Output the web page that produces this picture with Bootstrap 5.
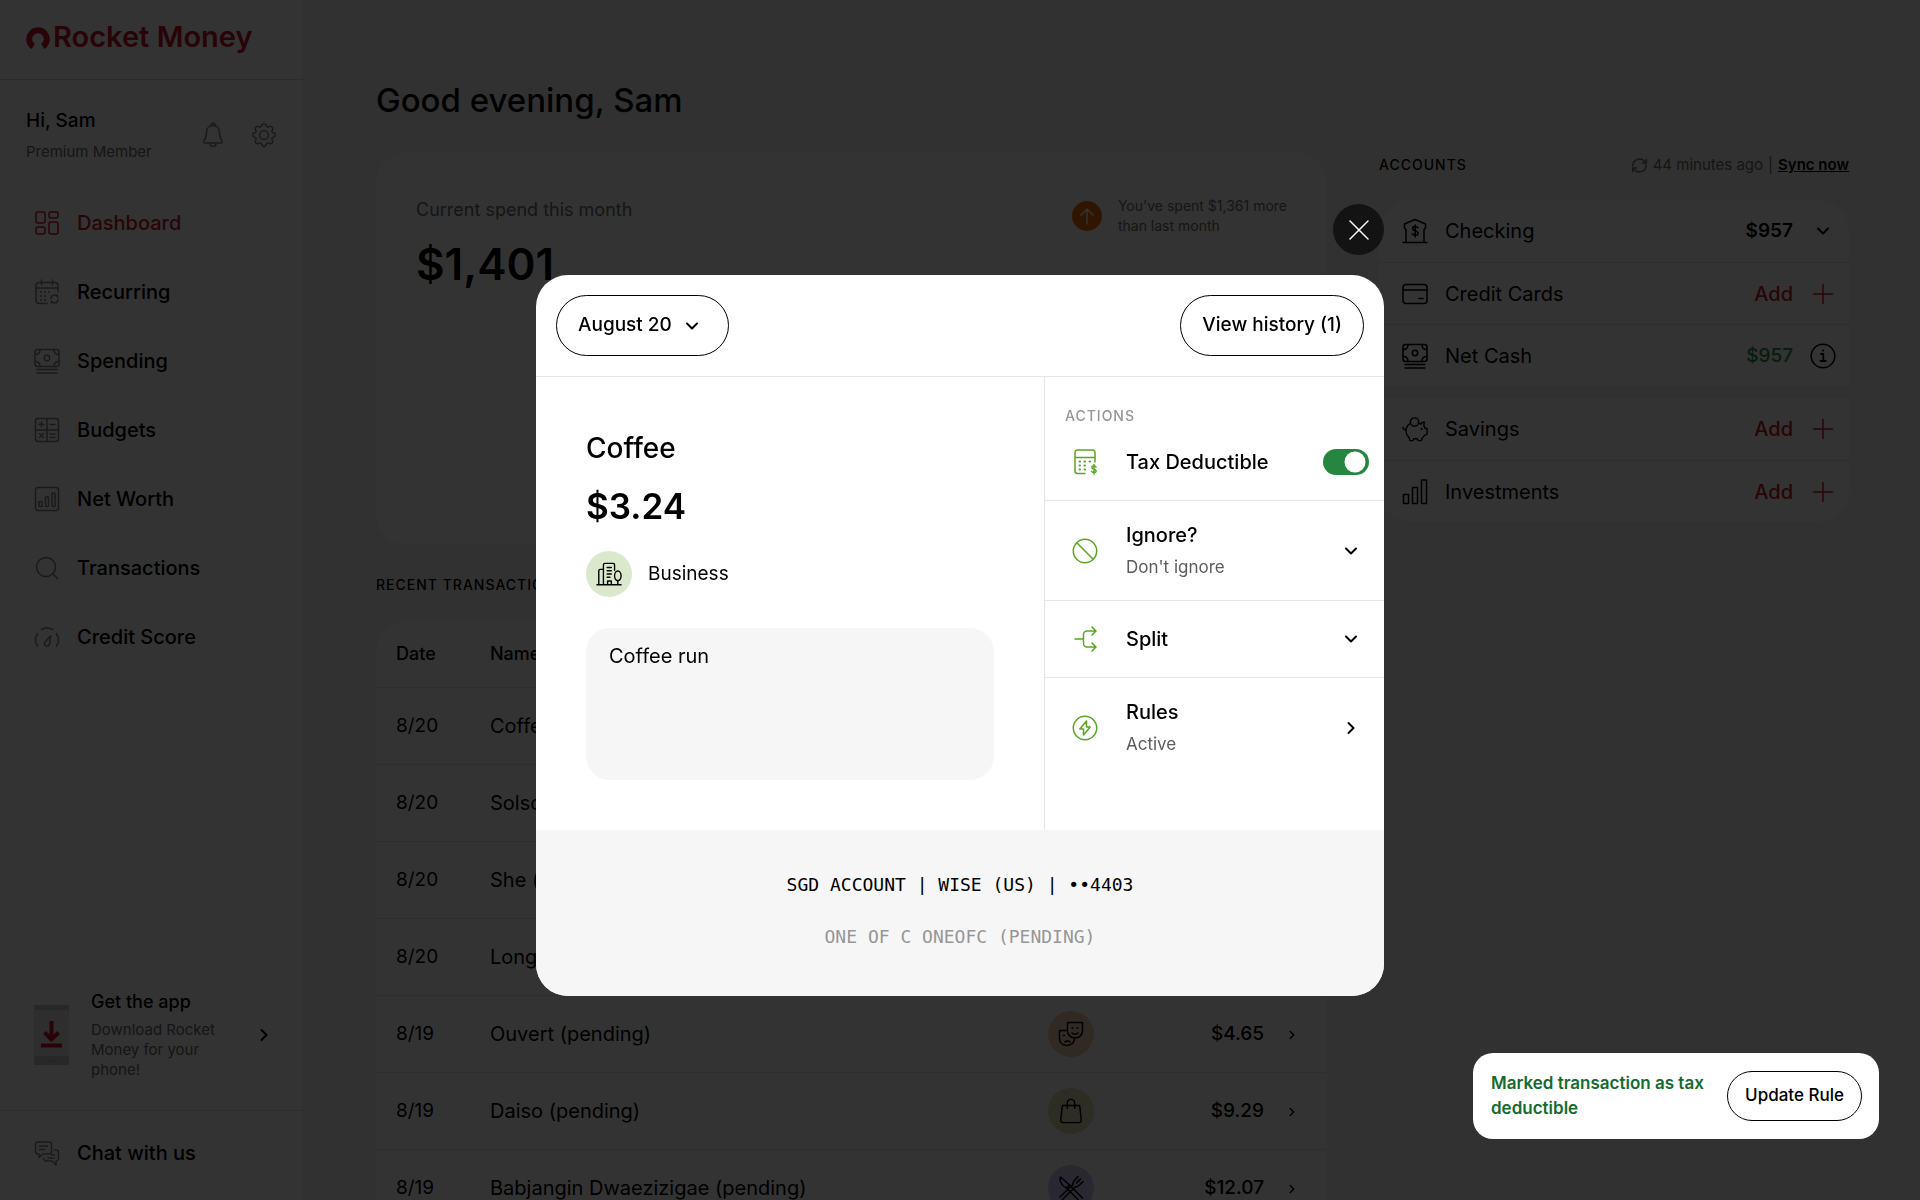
<!DOCTYPE html>
<html lang="en">
<head>
<meta charset="utf-8">
<meta name="viewport" content="width=device-width, initial-scale=1">
<title>Rocket Money</title>
<link href="https://cdn.jsdelivr.net/npm/bootstrap@5.3.0/dist/css/bootstrap.min.css" rel="stylesheet">
<style>
  :root { --brand: #c8142c; --line: #e6e6e6; --leaf: #5ba521; --muted-ink: #6b6b6b; }
  body { font-family: Inter, "Liberation Sans", sans-serif; font-size: 20px; line-height: 26px; color: #000; background: #f5f5f5; }
  svg { fill: none; stroke: currentColor; stroke-width: 1.5; stroke-linecap: round; stroke-linejoin: round; flex: none; }
  .ico { width: 26px; height: 26px; }
  .chev { width: 14px; height: 14px; stroke-width: 2; }
  .chev-sm { width: 10px; height: 10px; stroke-width: 2; }
  .fs-xs { font-size: 14px; line-height: 20px; }
  .fs-sm { font-size: 15px; line-height: 20px; }
  .fs-md { font-size: 18px; line-height: 24px; }
  .fs-lg { font-size: 19px; }
  .quiet { color: var(--muted-ink); }
  .brand-ink { color: var(--brand); }

  .side { width: 304px; background: #fff; border-right: 1px solid #f0f0f0; }
  .brand-bar { height: 80px; padding: 0 26px 6px; border-bottom: 1px solid #d8d8d8; font-size: 29px; font-weight: 600; gap: 2px; }
  .user-bar { padding: 28px 26px 0; }
  .user-icons { gap: 25px; }
  .icon-btn { background: none; border: 0; padding: 0; color: #808080; line-height: 0; }
  .menu-link { display: flex; align-items: center; gap: 17px; height: 69px; padding: 0 34px; font-weight: 500; color: #000; text-decoration: none; }
  .menu-link svg { color: #808080; }
  .menu-link.active, .menu-link.active svg { color: var(--brand); }
  .menu-list { padding-top: 26px; }
  .app-promo { padding: 0 32px 30px 34px; color: #000; text-decoration: none; gap: 22px; }
  .app-title { margin-bottom: 6px; }
  .chat-bar { border-top: 1px solid #e0e0e0; padding: 7px 0 13px; }

  .board { padding: 80px 71px 0 72px; gap: 52px; }
  .board h1 { font-size: 33px; line-height: 40px; font-weight: 500; margin: 0 0 32px; }
  .panel { background: #fff; border-radius: 32px; }
  .spend { height: 393px; padding: 46px 40px; }
  .total { font-size: 44px; line-height: 56px; font-weight: 600; margin-top: 14px; }
  .caption { font-size: 14px; line-height: 20px; font-weight: 500; letter-spacing: 1px; text-transform: uppercase; margin: 0; }
  .tx-caption { margin: 30px 0 26px; }
  .spend-alert { gap: 16px; margin-top: -2px; }
  .alert-dot { width: 30px; height: 30px; border-radius: 50%; background: #ed6800; color: #fff; }
  .tx { margin: 0; color: #000; border-collapse: collapse; }
  .tx th, .tx td { padding: 0 0 0 20px; vertical-align: middle; border: 0; border-bottom: 1px solid #e6e6e6; background: none; color: #000; }
  .tx th { height: 66px; font-size: 18px; font-weight: 500; }
  .tx td { height: 77px; }
  .tx td:first-child { font-size: 19px; }
  .tx td:last-child { padding-left: 23px; }
  .tx-date { width: 94px; } .tx-cat { width: 122px; } .tx-sum { width: 114px; } .tx-go { width: 63px; }
  .cat { width: 46px; height: 46px; border-radius: 50%; display: flex; align-items: center; justify-content: center; }
  .c-green { background: #dae8cb; } .c-peach { background: #f5cfae; } .c-olive { background: #e2dfae; } .c-violet { background: #cdc6f5; }

  .accounts { width: 470px; flex: none; padding-top: 75px; }
  .sync-row { gap: 5px; margin-bottom: 25px; }
  .acct { display: flex; align-items: center; height: 62px; padding: 0 13px 0 23px; }
  .acct + .acct { border-top: 1px solid #e6e6e6; }
  .acct .name { margin-left: 17px; margin-right: auto; }
  .acct .end-ico { margin-left: 17px; width: 26px; display: flex; justify-content: center; }
  .sum { font-size: 19px; font-weight: 600; }
  .money-up { color: #238a48; font-weight: 500; }
  .panel-gap { margin-top: 12px; }

  .modal-backdrop { --bs-backdrop-opacity: .8; }
  .tx-dialog { max-width: 848px; flex-direction: column; justify-content: center; align-items: stretch !important; }
  .close-dot { width: 51px; height: 51px; border: 0; border-radius: 50%; background: #131313; color: #fff; margin-bottom: 20px; }
  .tx-dialog .modal-content { border: 0; border-radius: 32px; overflow: hidden; color: #000; }
  .tx-head { padding: 20px; border-bottom: 1px solid var(--line); }
  .pill { --bs-btn-color: #000; --bs-btn-border-color: #000; --bs-btn-hover-bg: #f2f2f2; --bs-btn-hover-color: #000; --bs-btn-border-radius: 50rem; font-weight: 500; }
  .pill-lg { font-size: 19px; height: 61px; padding: 0 21px; }
  .pill-lg svg { margin: 0 8px 0 13px; }
  .pill-md { font-size: 17px; height: 50px; padding: 0 17px; white-space: nowrap; }
  .detail { padding: 50px; }
  .detail h2 { font-size: 28px; line-height: 42px; font-weight: 500; margin: 0; }
  .amount { font-size: 35px; line-height: 48px; font-weight: 600; margin: 13px 0 21px; }
  .note { height: 152px; border: 0; border-radius: 24px; background: #f6f6f6 !important; padding: 15px 23px; font-size: 20px; line-height: 26px; color: #000; resize: none; margin-top: 31px; }
  .acts { width: 340px; flex: none; border-left: 1px solid var(--line); padding-top: 29px; }
  .acts .caption { padding-left: 20px; color: #969696; }
  .act { display: flex; align-items: center; width: 100%; border: 0; background: none; text-align: left; padding: 0 26px 0 27px; color: #000; }
  .act + .act { border-top: 1px solid var(--line); }
  .act > svg:first-child { color: var(--leaf); margin-right: 28px; }
  .act .grow { flex: 1; font-weight: 500; }
  .act small { display: block; font-size: 17px; line-height: 24px; margin-top: 7px; font-weight: 400; color: #5c5c5c; }
  .act-tax { height: 74px; padding: 0 15px 3px 27px; }
  .act-one { height: 77px; } .act-two { height: 100px; }
  .form-switch .toggle { width: 46px; height: 26px; margin: 0; float: none; border: 0; background-color: #26863f; background-size: 28px; background-position: right -1px center; }
  .form-switch .toggle:checked { background-color: #26863f; }
  .form-switch .toggle:focus { box-shadow: none; }
  .source { background: #f6f6f6; padding: 42px 20px 46px; font-family: "DejaVu Sans Mono", "Liberation Mono", monospace; font-size: 18px; text-align: center; }
  .source p { margin: 0; } .source p + p { margin-top: 26px; color: #969696; }

  .note-toast { right: 41px; bottom: 61px; z-index: 1080; width: 406px; padding: 18px 17px 18px 18px; gap: 16px; background: #fff; border-radius: 20px; }
  .note-toast p { margin: 0; font-size: 17px; line-height: 25px; font-weight: 600; color: #146c2e; }
</style>
<script src="https://cdn.jsdelivr.net/npm/bootstrap@5.3.0/dist/js/bootstrap.bundle.min.js"></script>
</head>
<body class="vh-100 overflow-hidden">

<svg width="0" height="0" class="d-none" aria-hidden="true">
  <symbol id="down" viewBox="0 0 14 14"><path d="M2 4.500l5 5 5-5"/></symbol>
  <symbol id="right" viewBox="0 0 14 14"><path d="M4.500 2l5 5-5 5"/></symbol>
  <symbol id="plus" viewBox="0 0 24 24"><path d="M12 2.500v19M2.500 12h19"/></symbol>
  <symbol id="bell" viewBox="0 0 26 26"><path d="M13 3.500c-4.500 0-6.500 3.500-6.500 7 0 5-1.500 6.500-2.500 8.500-.5 1 0 2 1.200 2h15.600c1.200 0 1.700-1 1.200-2-1-2-2.500-3.500-2.500-8.500 0-3.500-2-7-6.500-7zM11 3.300c0-2.800 4-2.800 4 0M10 21.500c0 4 6 4 6 0"/></symbol>
  <symbol id="gear" viewBox="0 0 26 26"><circle cx="13" cy="13" r="4.500"/><path d="M10.800 3.500c.6-2.500 3.800-2.500 4.400 0 .4 1.600 1.600 2 3 1.200 2.100-1.300 4.400 1 3.100 3.100-.8 1.400-.4 2.600 1.200 3 2.500.6 2.500 3.800 0 4.400-1.600.4-2 1.600-1.200 3 1.300 2.100-1 4.400-3.100 3.100-1.400-.8-2.600-.4-3 1.200-.6 2.500-3.800 2.500-4.400 0-.4-1.600-1.600-2-3-1.200-2.100 1.300-4.400-1-3.100-3.100.8-1.400.4-2.600-1.200-3-2.500-.6-2.500-3.800 0-4.400 1.600-.4 2-1.600 1.200-3-1.300-2.100 1-4.400 3.100-3.100 1.400.8 2.600.4 3-1.200z"/></symbol>
  <symbol id="grid" viewBox="0 0 26 26"><rect x="2" y="2" width="9" height="11" rx="2"/><rect x="15" y="2" width="9" height="6" rx="2"/><rect x="2" y="17" width="9" height="7" rx="2"/><rect x="15" y="12" width="9" height="12" rx="2"/></symbol>
  <symbol id="calendar" viewBox="0 0 26 26"><path d="M13 24.500H5a3 3 0 0 1-3-3v-15a3 3 0 0 1 3-3h16a3 3 0 0 1 3 3v6M2 9h22M7.500 1v5M18.500 1v5M17 19.500c0-4 5.500-4.500 6.500-1.500v-2M24 20.500c0 4-5.500 4.500-6.500 1.500v2"/><path d="M7 13h.1M11 13h.1M15 13h.1M7 17h.1M11 17h.1M7 21h.1M11 21h.1" stroke-width="2"/></symbol>
  <symbol id="cash" viewBox="0 0 26 26"><rect x="1" y="1.500" width="24" height="17" rx="2.500"/><circle cx="13" cy="10" r="2.700"/><path d="M1.500 6.500c3 0 4.500-2 4.500-5M24.500 6.500c-3 0-4.500-2-4.500-5M1.500 13.500c3 0 4.500 2 4.500 5M24.500 13.500c-3 0-4.500 2-4.500 5M3 21.500h20M3 25h20"/></symbol>
  <symbol id="calc" viewBox="0 0 26 26"><rect x="1.500" y="1.500" width="23" height="23" rx="2.500"/><path d="M13 1.500v23M1.500 13h23M5 7.500h5M7.500 5v5M16 7.500h5M5.500 16.500l4 4M9.500 16.500l-4 4M16 17h5M16 20.500h5"/></symbol>
  <symbol id="chart" viewBox="0 0 26 26"><rect x="1.500" y="1.500" width="23" height="23" rx="2.500"/><rect x="5" y="15.500" width="3" height="5" rx=".5"/><rect x="11.500" y="11" width="3" height="9.500" rx=".5"/><rect x="18" y="7" width="3" height="13.500" rx=".5"/></symbol>
  <symbol id="search" viewBox="0 0 26 26"><circle cx="12" cy="12" r="9.500"/><path d="M19 19l4.500 4.500"/></symbol>
  <symbol id="gauge" viewBox="0 0 26 26"><path d="M7.500 5.500c3.500-2.300 7.500-2.300 11 0M3.500 9.500c-2.500 4-2.500 9 0 12.500M22.500 9.500c2.500 4 2.500 9 0 12.500M16.500 12l-5.500 6c-1.800 2.500 1.500 5.500 3.700 3.500.8-.9 1-1.500 1.100-2.500z"/></symbol>
  <symbol id="chat" viewBox="0 0 26 26"><path d="M4 2h11a2.500 2.500 0 0 1 2.500 2.500v7A2.500 2.500 0 0 1 15 14H9l-4 3.500V14H4a2.500 2.500 0 0 1-2.500-2.500v-7A2.500 2.500 0 0 1 4 2zM5.500 6h8M5.500 9.500h5M20.500 10H22a2.500 2.500 0 0 1 2.500 2.500v6A2.500 2.500 0 0 1 22 21v4l-4-4h-6a2.500 2.500 0 0 1-2.500-2.500M14 18h6M17.500 15h3"/></symbol>
  <symbol id="bank" viewBox="0 0 26 26"><path d="M1 24.500h24M4 24V11.500L2.500 10V6L13 1.500 23.500 6v4L22 11.500V24M16 9.800c-1.200-2-5.500-1.800-5.500.8 0 3 5.500 1.500 5.500 4.600 0 2.600-4.500 2.800-5.800.5M13.200 7v12"/></symbol>
  <symbol id="ccard" viewBox="0 0 26 26"><rect x="1" y="3.500" width="24" height="19" rx="3"/><path d="M1 9h24M17 17.500h4"/></symbol>
  <symbol id="info" viewBox="0 0 26 26"><circle cx="13" cy="13" r="11.800"/><path d="M11 11h2.300v7M10.500 18h5.300M13 7.500h.2" stroke-width="1.800"/></symbol>
  <symbol id="pig" viewBox="0 0 28 26"><circle cx="13.500" cy="5.500" r="4.500"/><path d="M17.500 6.500c1 .2 2 .6 3 1.200.6-1.400 1.800-2.200 3.500-2.200l-.5 4c.8 1 1.200 2 1.500 3h2v6l-3 1.500c-.8 1.500-1.800 2.500-2.500 3.200l-.8 2.300h-3.400l-.8-2h-3.800l-.8 2H8.500L7.500 22c-3.500-3-4.500-8.500-1.500-12.500.9-1.200 2-2 3.200-2.600M4.500 13.500c-2 .5-3.500-.5-3.500-2.500"/><path d="M21 13h.1" stroke-width="2.200"/></symbol>
  <symbol id="bars" viewBox="0 0 26 26"><rect x="1.500" y="15.500" width="5" height="9"/><rect x="10.500" y="8.500" width="5" height="16"/><rect x="19.500" y="1" width="5" height="23.500"/></symbol>
  <symbol id="sync" viewBox="0 0 18 18"><path d="M2 9.500C1.500 3 10-.5 14.500 4.500L16 6.200M16 8.500c.5 6.500-8 10-12.500 5L2 11.800M16.300 2.300v4h-4M1.700 15.700v-4h4"/></symbol>
  <symbol id="city" viewBox="0 0 28 26"><path d="M1 24.500h26M3 24V9.500a1.500 1.500 0 0 1 1.500-1.500H8V24M8 24V3a1.500 1.500 0 0 1 1.500-1.500h9A1.500 1.500 0 0 1 20 3v6M12 6h4.500M12 9.500h4.500M12 13h4.500M12 16.500h3M12.500 24v-3.500h4V24M23.500 24v-3.500"/><ellipse cx="23.500" cy="15" rx="3.500" ry="5.200"/></symbol>
  <symbol id="masks" viewBox="0 0 26 26"><path d="M9.500 1.500H24.500v8c0 10-15 10-15 0zM8.500 9.500H1.500v8c0 8.500 13 9.500 15 1"/><path d="M14 12c1.500 1.500 4.500 1.500 6 0M7 21c1-1.500 4-1.500 5 0M14 7h1M19 7h1M5.500 14.500h1"/></symbol>
  <symbol id="bag" viewBox="0 0 26 28"><path d="M4.500 8h17a1 1 0 0 1 1 1l1.500 15a2.500 2.500 0 0 1-2.500 2.500h-17A2.500 2.500 0 0 1 2 24L3.500 9a1 1 0 0 1 1-1zM9 11V6c0-6 8-6 8 0v5"/></symbol>
  <symbol id="dine" viewBox="0 0 26 26"><path d="M2.500 2c-1.500 4 1.500 9 6 11l3-3zM11.500 10L24.500 23M8.500 13l11.500 11.500M2 22L15 9.500M4.500 24.500L17.500 11.500M15 9.500c-.5-1.500 0-2.500 1-3.500L20 1.500M17.500 11.500c1.500.5 2.500 0 3.500-1L25 6.500M18.500 8l4-4"/></symbol>
  <symbol id="tax" viewBox="0 0 26 26"><path d="M13 24.500H5.500A2.500 2.500 0 0 1 3 22V3.500A2.500 2.500 0 0 1 5.500 1h15A2.500 2.500 0 0 1 23 3.500V13M3 8.500h20M24 18c-1-1.700-4.200-1.500-4.200.4 0 2.200 4.400 1.300 4.400 3.600 0 2-3.500 2.200-4.600.4M22 15.500v9.500"/><path d="M7.500 12.500h.5M12.500 12.500h.5M17.500 12.500h.5M7.500 16.500h.5M12.500 16.500h.5M7.500 20.500h.5M12.500 20.500h.5" stroke-width="2"/></symbol>
  <symbol id="ban" viewBox="0 0 26 26"><circle cx="13" cy="13" r="11.700"/><path d="M4.800 4.800l16.400 16.400"/></symbol>
  <symbol id="split" viewBox="0 0 26 26"><path d="M3 13h8.500M23.500 5H15a3.500 3.500 0 0 0-3.500 3.500v9A3.500 3.500 0 0 0 15 21h8.500M20 1l4 4-4 4M20 17l4 4-4 4"/></symbol>
  <symbol id="bolt" viewBox="0 0 26 26"><circle cx="13" cy="13" r="11.700"/><path d="M14.500 6l-6.700 8h3.700v6l6.700-8h-3.700z"/></symbol>
</svg>

<div class="d-flex vh-100">
  <aside class="side d-flex flex-column flex-shrink-0 vh-100">
    <div class="brand-bar brand-ink d-flex align-items-center">
      <svg width="25" height="25" viewBox="0 0 25 25" aria-hidden="true"><path d="M7.200 22.500A8.800 8.800 0 1 1 16.800 22.500" stroke-width="6" stroke-linecap="butt"/></svg>
      <span>Rocket Money</span>
    </div>
    <div class="user-bar d-flex align-items-center justify-content-between">
      <div>
        <div class="fs-lg fw-medium">Hi, Sam</div>
        <div class="fs-sm quiet mt-2">Premium Member</div>
      </div>
      <div class="user-icons d-flex">
        <button class="icon-btn" type="button" aria-label="Notifications"><svg class="ico"><use href="#bell"/></svg></button>
        <button class="icon-btn" type="button" aria-label="Settings"><svg class="ico"><use href="#gear"/></svg></button>
      </div>
    </div>
    <nav class="menu-list">
      <a class="menu-link active" href="#"><svg class="ico"><use href="#grid"/></svg>Dashboard</a>
      <a class="menu-link" href="#"><svg class="ico"><use href="#calendar"/></svg>Recurring</a>
      <a class="menu-link" href="#"><svg class="ico"><use href="#cash"/></svg>Spending</a>
      <a class="menu-link" href="#"><svg class="ico"><use href="#calc"/></svg>Budgets</a>
      <a class="menu-link" href="#"><svg class="ico"><use href="#chart"/></svg>Net Worth</a>
      <a class="menu-link" href="#"><svg class="ico"><use href="#search"/></svg>Transactions</a>
      <a class="menu-link" href="#"><svg class="ico"><use href="#gauge"/></svg>Credit Score</a>
    </nav>
    <a class="app-promo d-flex align-items-center mt-auto" href="#">
      <svg width="35" height="60" viewBox="0 0 35 60" aria-hidden="true"><path d="M0 0h35v60H0z" fill="#e4e4e4" stroke="none"/><path d="M0 0h35v5H0zM0 51h35v9H0z" fill="#c8c8c8" stroke="none"/><path d="M12 55.500h10" stroke="#b5b5b5"/><path d="M17.500 16v18M10.500 27.500l7 7 7-7M7 40.500h21" stroke="#c8142c" stroke-width="4" stroke-linecap="butt"/></svg>
      <span class="flex-grow-1">
        <span class="app-title d-block fs-md fw-medium">Get the app</span>
        <span class="d-block fs-sm quiet">Download Rocket<br>Money for your<br>phone!</span>
      </span>
      <svg class="chev"><use href="#right"/></svg>
    </a>
    <div class="chat-bar"><a class="menu-link" href="#"><svg class="ico"><use href="#chat"/></svg>Chat with us</a></div>
  </aside>

  <main class="board flex-grow-1 d-flex align-items-start">
    <section class="flex-grow-1">
      <h1>Good evening, Sam</h1>
      <div class="panel spend d-flex justify-content-between align-items-start">
        <div>
          <div class="fs-md quiet">Current spend this month</div>
          <div class="total">$1,401</div>
        </div>
        <div class="spend-alert d-flex align-items-center fs-xs quiet">
          <span class="alert-dot d-flex align-items-center justify-content-center"><svg width="18" height="18" viewBox="0 0 18 18"><path d="M9 17V2M3 8l6-6 6 6"/></svg></span>
          <span>You've spent $1,361 more<br>than last month</span>
        </div>
      </div>
      <h2 class="caption tx-caption">Recent transactions</h2>
      <div class="panel">
        <table class="table tx">
          <colgroup><col class="tx-date"><col><col class="tx-cat"><col class="tx-sum"><col class="tx-go"></colgroup>
          <thead><tr><th>Date</th><th>Name</th><th>Category</th><th class="text-end">Amount</th><th></th></tr></thead>
          <tbody>
            <tr><td>8/20</td><td>Coffee</td><td><span class="cat c-green"><svg class="ico"><use href="#city"/></svg></span></td><td class="text-end fs-lg fw-medium">$3.24</td><td><svg class="chev-sm"><use href="#right"/></svg></td></tr>
            <tr><td>8/20</td><td>Solso</td><td></td><td></td><td></td></tr>
            <tr><td>8/20</td><td>She (pending)</td><td></td><td></td><td></td></tr>
            <tr><td>8/20</td><td>Long</td><td></td><td></td><td></td></tr>
            <tr><td>8/19</td><td>Ouvert (pending)</td><td><span class="cat c-peach"><svg class="ico"><use href="#masks"/></svg></span></td><td class="text-end fs-lg fw-medium">$4.65</td><td><svg class="chev-sm"><use href="#right"/></svg></td></tr>
            <tr><td>8/19</td><td>Daiso (pending)</td><td><span class="cat c-olive"><svg class="ico"><use href="#bag"/></svg></span></td><td class="text-end fs-lg fw-medium">$9.29</td><td><svg class="chev-sm"><use href="#right"/></svg></td></tr>
            <tr><td>8/19</td><td>Babjangin Dwaezizigae (pending)</td><td><span class="cat c-violet"><svg class="ico"><use href="#dine"/></svg></span></td><td class="text-end fs-lg fw-medium">$12.07</td><td><svg class="chev-sm"><use href="#right"/></svg></td></tr>
          </tbody>
        </table>
      </div>
    </section>

    <section class="accounts">
      <div class="sync-row d-flex align-items-center fs-sm quiet">
        <h2 class="caption text-black me-auto">Accounts</h2>
        <svg width="17" height="17"><use href="#sync"/></svg><span>44 minutes ago</span><span>|</span><a class="text-black fw-semibold" href="#">Sync now</a>
      </div>
      <div class="panel rounded-bottom-0">
        <div class="acct"><svg class="ico"><use href="#bank"/></svg><span class="name">Checking</span><span class="sum">$957</span><span class="end-ico"><svg class="chev"><use href="#down"/></svg></span></div>
        <div class="acct"><svg class="ico"><use href="#ccard"/></svg><span class="name">Credit Cards</span><a class="brand-ink fw-medium text-decoration-none" href="#">Add</a><span class="end-ico brand-ink"><svg width="24" height="24"><use href="#plus"/></svg></span></div>
        <div class="acct"><svg class="ico"><use href="#cash"/></svg><span class="name">Net Cash</span><span class="sum money-up">$957</span><span class="end-ico"><svg class="ico"><use href="#info"/></svg></span></div>
      </div>
      <div class="panel panel-gap rounded-top-0">
        <div class="acct"><svg class="ico"><use href="#pig"/></svg><span class="name">Savings</span><a class="brand-ink fw-medium text-decoration-none" href="#">Add</a><span class="end-ico brand-ink"><svg width="24" height="24"><use href="#plus"/></svg></span></div>
        <div class="acct"><svg class="ico"><use href="#bars"/></svg><span class="name">Investments</span><a class="brand-ink fw-medium text-decoration-none" href="#">Add</a><span class="end-ico brand-ink"><svg width="24" height="24"><use href="#plus"/></svg></span></div>
      </div>
    </section>
  </main>
</div>

<div class="modal-backdrop show"></div>
<div class="modal show d-block" tabindex="-1" role="dialog" aria-label="Transaction">
  <div class="modal-dialog modal-dialog-centered tx-dialog">
    <button class="close-dot d-flex align-items-center justify-content-center align-self-end pe-auto" type="button" aria-label="Close"><svg width="20" height="20" viewBox="0 0 20 20" stroke-width="1.8"><path d="M1 1l18 18M19 1L1 19"/></svg></button>
    <div class="modal-content">
      <div class="tx-head d-flex justify-content-between">
        <button class="btn pill pill-lg d-flex align-items-center" type="button">August 20<svg class="chev"><use href="#down"/></svg></button>
        <button class="btn pill pill-lg" type="button">View history (1)</button>
      </div>
      <div class="d-flex">
        <div class="detail flex-grow-1">
          <h2>Coffee</h2>
          <div class="amount">$3.24</div>
          <div class="d-flex align-items-center fs-lg"><span class="cat c-green me-3"><svg class="ico"><use href="#city"/></svg></span>Business</div>
          <textarea class="form-control note" aria-label="Note">Coffee run</textarea>
        </div>
        <div class="acts">
          <h3 class="caption">Actions</h3>
          <div class="act act-tax form-switch"><svg class="ico"><use href="#tax"/></svg><label class="grow" for="tax-toggle">Tax Deductible</label><input class="form-check-input toggle" type="checkbox" role="switch" id="tax-toggle" checked></div>
          <button class="act act-two" type="button"><svg class="ico"><use href="#ban"/></svg><span class="grow">Ignore?<small>Don't ignore</small></span><svg class="chev"><use href="#down"/></svg></button>
          <button class="act act-one" type="button"><svg class="ico"><use href="#split"/></svg><span class="grow">Split</span><svg class="chev"><use href="#down"/></svg></button>
          <button class="act act-two" type="button"><svg class="ico"><use href="#bolt"/></svg><span class="grow">Rules<small>Active</small></span><svg class="chev"><use href="#right"/></svg></button>
        </div>
      </div>
      <div class="source">
        <p>SGD ACCOUNT | WISE (US) | ••4403</p>
        <p>ONE OF C ONEOFC (PENDING)</p>
      </div>
    </div>
  </div>
</div>

<div class="note-toast position-fixed d-flex align-items-center" role="status">
  <p class="flex-grow-1">Marked transaction as tax deductible</p>
  <button class="btn pill pill-md" type="button">Update Rule</button>
</div>
</body>
</html>
